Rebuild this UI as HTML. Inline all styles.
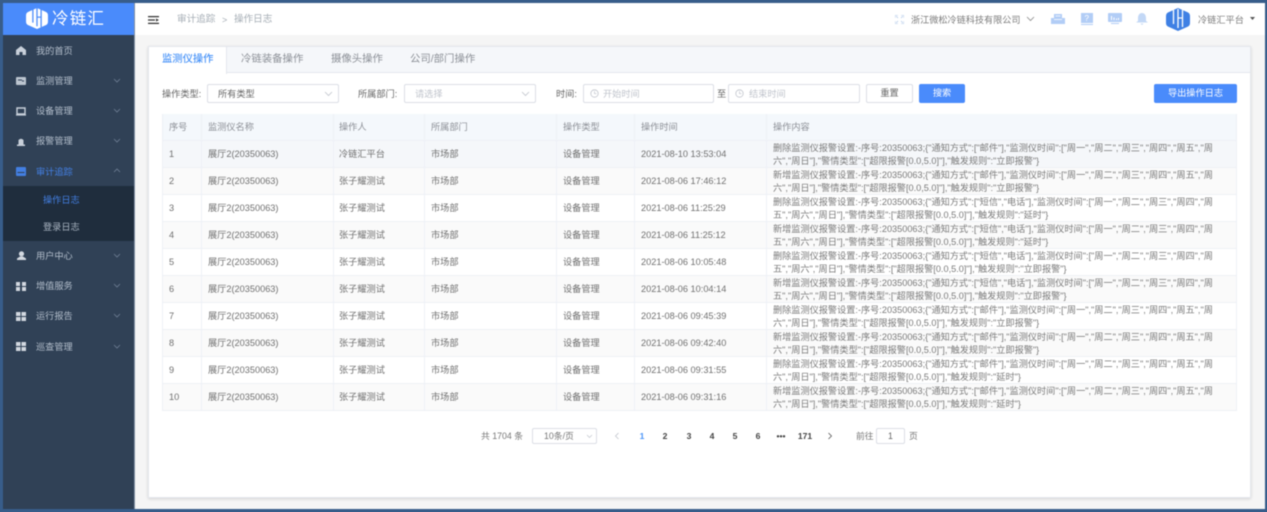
<!DOCTYPE html>
<html lang="zh"><head><meta charset="utf-8"><title>操作日志</title>
<style>
*{box-sizing:border-box;margin:0;padding:0}
html,body{width:1267px;height:512px;overflow:hidden;background:#385d8a}
body{position:relative;font-family:"Liberation Sans","Noto Sans CJK SC",sans-serif;font-size:9.2px;color:#666}
#wrap{position:absolute;left:0;top:0;width:1267px;height:512px;filter:blur(.42px)}
.a{position:absolute;white-space:nowrap}
.t{position:absolute;white-space:nowrap;line-height:14px}
.mi{color:#b4bfcc;left:36px;font-size:9.2px}
.ch{position:absolute;left:113px;width:8px;height:5px}
.r{position:absolute;left:162px;width:1075px;height:27px;border-bottom:1px solid #eef0f5;color:#707070}
.r span{position:absolute;top:6px;line-height:14px;white-space:nowrap}
.r .c1{left:7px}.r .c2{left:46px}.r .c3{left:177px}.r .c4{left:269px}.r .c5{left:401px}.r .c6{left:479px}
.r .c7{left:611px;top:0;line-height:13px;padding-top:1px;font-size:9.16px;color:#7a7a7a}
.e{background:#fafafa}
.v{position:absolute;top:114px;width:1px;height:297px;background:#eef1f6}
.inp{position:absolute;top:84px;height:19px;background:#fff;border:1px solid #dcdfe6;border-radius:2px}
.pg{position:absolute;top:429px;line-height:14px;font-weight:bold;font-size:8.6px;color:#444;transform:translateX(-50%)}
</style></head><body><div id="wrap">
<div class="a" style="left:3px;top:3px;width:1262px;height:506px;background:#f5f5f5"></div>
<div class="a" style="left:135px;top:3px;width:1130px;height:32px;background:#fff"></div>
<div class="a" style="left:3px;top:3px;width:131px;height:506px;background:#304156"></div>
<div class="a" style="left:134px;top:3px;width:1px;height:506px;background:#7f8ea3"></div>
<div class="a" style="left:3px;top:3px;width:131px;height:32px;background:#4a8bfb"></div>

<svg class="a" style="left:26px;top:8px" width="22" height="21" viewBox="0 0 24 23"><path d="M12 0 21 4Q24 5 24 8V15Q24 18 21 19L12 23 3 19Q0 18 0 15V8Q0 5 3 4Z" fill="#fff"/><path d="M7.500 1V16M12 0V20M16.500 1V21" stroke="#4a8bfb" stroke-width="1.400"/><path d="M12 10H17" stroke="#4a8bfb" stroke-width="1.300"/></svg>
<div class="t" style="left:52px;top:9px;color:#fff;font-size:16.500px;line-height:20px;letter-spacing:1.200px">冷链汇</div>

<!-- sidebar -->
<svg class="a" style="left:16px;top:46px" width="10" height="9" viewBox="0 0 10 9"><path d="M5 0 10 4V9H6.500V6H3.500V9H0V4Z" fill="#c8d0da"/></svg>
<div class="t mi" style="top:44px">我的首页</div>
<svg class="a" style="left:16px;top:77px" width="10" height="8" viewBox="0 0 10 8"><rect width="10" height="8" rx="1" fill="#bcc5d0"/><path d="M2 3H6M6 4H8" stroke="#304156"/></svg>
<div class="t mi" style="top:74px">监测管理</div>
<svg class="ch" style="top:78px" viewBox="0 0 8 5"><path d="M1 1 4 4 7 1" fill="none" stroke="#6f7f95" stroke-width=".8"/></svg>
<svg class="a" style="left:16px;top:107px" width="10" height="9" viewBox="0 0 10 9"><path d="M1 1H9V7H1Z" fill="none" stroke="#c8d0da" stroke-width="1.400"/><path d="M0 8H10" stroke="#c8d0da" stroke-width="1.200"/></svg>
<div class="t mi" style="top:104px">设备管理</div>
<svg class="ch" style="top:108px" viewBox="0 0 8 5"><path d="M1 1 4 4 7 1" fill="none" stroke="#6f7f95" stroke-width=".8"/></svg>
<svg class="a" style="left:17px;top:138px" width="8" height="8" viewBox="0 0 8 8"><path d="M1.500 2 Q4 -.5 6.500 2V6.500H1.500Z M0 6.500H8V8H0Z" fill="#c8d0da"/></svg>
<div class="t mi" style="top:134px">报警管理</div>
<svg class="ch" style="top:138px" viewBox="0 0 8 5"><path d="M1 1 4 4 7 1" fill="none" stroke="#6f7f95" stroke-width=".8"/></svg>
<svg class="a" style="left:16px;top:167px" width="10" height="9" viewBox="0 0 10 9"><rect width="10" height="9" rx="1" fill="#437fe2"/><path d="M1.500 5.500H8.500" stroke="#304156"/></svg>
<div class="t mi" style="top:165px;color:#437fe2">审计追踪</div>
<svg class="ch" style="top:168px" viewBox="0 0 8 5"><path d="M1 4 4 1 7 4" fill="none" stroke="#6f7f95" stroke-width=".8"/></svg>
<div class="a" style="left:3px;top:186px;width:131px;height:55px;background:#1f2d3d"></div>
<div class="t" style="left:43px;top:193px;color:#437fe2">操作日志</div>
<div class="t" style="left:43px;top:220px;color:#aab5c2">登录日志</div>
<svg class="a" style="left:17px;top:251px" width="9" height="9" viewBox="0 0 9 9"><circle cx="4.500" cy="2.800" r="2.600" fill="#d2d8e0"/><path d="M0 9V7.500L3 5.500H6L9 7.500V9Z" fill="#d2d8e0"/></svg>
<div class="t mi" style="top:249px">用户中心</div>
<svg class="ch" style="top:253px" viewBox="0 0 8 5"><path d="M1 1 4 4 7 1" fill="none" stroke="#6f7f95" stroke-width=".8"/></svg>
<svg class="a" style="left:16px;top:282px" width="10" height="9" viewBox="0 0 10 9"><path d="M0 0H4V4H0ZM6 0H10V4H6ZM0 5H4V9H0ZM6 5H10V9H6Z" fill="#d2d8e0"/></svg>
<div class="t mi" style="top:279px">增值服务</div>
<svg class="ch" style="top:283px" viewBox="0 0 8 5"><path d="M1 1 4 4 7 1" fill="none" stroke="#6f7f95" stroke-width=".8"/></svg>
<svg class="a" style="left:16px;top:312px" width="10" height="9" viewBox="0 0 10 9"><path d="M0 0H4.500V4H0ZM5.500 0H10V4H5.500ZM0 5H4.500V9H0ZM5.500 5H10V9H5.500Z" fill="#d2d8e0"/></svg>
<div class="t mi" style="top:309px">运行报告</div>
<svg class="ch" style="top:313px" viewBox="0 0 8 5"><path d="M1 1 4 4 7 1" fill="none" stroke="#6f7f95" stroke-width=".8"/></svg>
<svg class="a" style="left:16px;top:342px" width="10" height="9" viewBox="0 0 10 9"><path d="M0 0H4.500V4H0ZM5.500 0H10V4H5.500ZM0 5H4.500V9H0ZM5.500 5H10V9H5.500Z" fill="#d2d8e0"/></svg>
<div class="t mi" style="top:340px">巡查管理</div>
<svg class="ch" style="top:344px" viewBox="0 0 8 5"><path d="M1 1 4 4 7 1" fill="none" stroke="#6f7f95" stroke-width=".8"/></svg>

<!-- top bar -->
<svg class="a" style="left:148px;top:16px" width="11" height="8" viewBox="0 0 11 8"><path d="M0 .6H11M0 4H7M0 7.400H11" stroke="#333" stroke-width="1.200"/><path d="M8 2.500 11 4 8 5.500Z" fill="#333"/></svg>
<div class="t" style="left:177px;top:13px;color:#a5adb5;font-size:9.600px">审计追踪</div>
<div class="t" style="left:222px;top:13px;color:#a5adb5;font-size:9px">&gt;</div>
<div class="t" style="left:234px;top:13px;color:#a5adb5;font-size:9.600px">操作日志</div>
<svg class="a" style="left:895px;top:15px" width="9" height="9" viewBox="0 0 9 9"><path d="M0 3V0H3M6 0H9V3M9 6V9H6M3 9H0V6M1 1 3 3M8 1 6 3M8 8 6 6M1 8 3 6" fill="none" stroke="#c3d5ee" stroke-width=".9"/></svg>
<div class="t" style="left:911px;top:12.500px;color:#7c7c7c;font-size:9.150px">浙江微松冷链科技有限公司</div>
<svg class="a" style="left:1026px;top:16px" width="9" height="6" viewBox="0 0 9 6"><path d="M1 1 4.500 4.500 8 1" fill="none" stroke="#888" stroke-width=".8"/></svg>
<svg class="a" style="left:1051px;top:14px" width="14" height="10" viewBox="0 0 14 10"><path d="M3 0H11V4H14V10H0V4H3Z" fill="#b2cdf6"/><path d="M4.500 2H9.500M3 5.500H11" stroke="#fff" stroke-width=".8"/></svg>
<svg class="a" style="left:1081px;top:13px" width="12" height="12" viewBox="0 0 12 12"><rect width="12" height="10" fill="#b2cdf6"/><rect y="11" width="12" height="1" fill="#b2cdf6"/></svg>
<div class="t" style="left:1084.500px;top:12.500px;color:#fff;font-size:8px;line-height:11px">?</div>
<svg class="a" style="left:1108px;top:13px" width="14" height="11" viewBox="0 0 14 11"><rect width="14" height="9" rx="1" fill="#b2cdf6"/><path d="M3.500 3V7M6 4.500V7M8.500 5.500V7M10.500 5V7" stroke="#fff"/><path d="M3 10.500H11" stroke="#b2cdf6"/></svg>
<svg class="a" style="left:1136px;top:13px" width="12" height="12" viewBox="0 0 12 12"><path d="M6 0C9 0 10 3 10 5V8L12 9.500H0L2 8V5C2 3 3 0 6 0Z M4.500 10.500H7.500L6 12Z" fill="#c3d8f6"/></svg>
<svg class="a" style="left:1166px;top:8px" width="24" height="23" viewBox="0 0 24 23"><path d="M12 0 21 4Q24 5 24 8V15Q24 18 21 19L12 23 3 19Q0 18 0 15V8Q0 5 3 4Z" fill="#3f80e4"/><path d="M7.500 2V16M12 1V20M16.500 2V19" stroke="#fff" stroke-width="1.300"/><path d="M12 10H17" stroke="#fff" stroke-width="1.200"/></svg>
<div class="t" style="left:1198px;top:12.500px;color:#7c7c7c;font-size:9.200px">冷链汇平台</div>
<svg class="a" style="left:1250px;top:17px" width="5" height="3" viewBox="0 0 5 3"><path d="M0 0H5L2.500 3Z" fill="#555"/></svg>

<!-- card -->
<div class="a" style="left:148px;top:46px;width:1103px;height:452px;background:#fff;border:1px solid #e4e7ed;box-shadow:0 1px 3px rgba(0,0,0,.14)"></div>
<div class="a" style="left:149px;top:47px;width:1101px;height:26px;background:#f5f7fa;border-bottom:1px solid #e4e7ed"></div>
<div class="a" style="left:149px;top:47px;width:78px;height:27px;background:#fff;border-right:1px solid #e4e7ed"></div>
<div class="t" style="left:162px;top:53px;color:#4a94f8;font-size:10.300px;font-weight:500">监测仪操作</div>
<div class="t" style="left:241px;top:53px;color:#8c9097;font-size:10.400px">冷链装备操作</div>
<div class="t" style="left:331px;top:53px;color:#8c9097;font-size:10.400px">摄像头操作</div>
<div class="t" style="left:410px;top:53px;color:#8c9097;font-size:10.400px">公司/部门操作</div>

<!-- filter -->
<div class="t" style="left:162px;top:87px;color:#666">操作类型:</div>
<div class="inp" style="left:207px;width:132px"></div>
<div class="t" style="left:218px;top:87px;color:#666">所有类型</div>
<svg class="a" style="left:324px;top:91px" width="9" height="6" viewBox="0 0 9 6"><path d="M1 1 4.500 4.500 8 1" fill="none" stroke="#c0c4cc" stroke-width=".8"/></svg>
<div class="t" style="left:358px;top:87px;color:#666">所属部门:</div>
<div class="inp" style="left:404px;width:132px"></div>
<div class="t" style="left:415px;top:87px;color:#c0c4cc">请选择</div>
<svg class="a" style="left:521px;top:91px" width="9" height="6" viewBox="0 0 9 6"><path d="M1 1 4.500 4.500 8 1" fill="none" stroke="#c0c4cc" stroke-width=".8"/></svg>
<div class="t" style="left:556px;top:87px;color:#666">时间:</div>
<div class="inp" style="left:583px;width:131px"></div>
<svg class="a" style="left:590px;top:89px" width="9" height="9" viewBox="0 0 9 9"><circle cx="4.500" cy="4.500" r="3.700" fill="none" stroke="#c0c4cc" stroke-width=".8"/><path d="M4.500 2.300V4.700H6.500" fill="none" stroke="#c0c4cc" stroke-width=".7"/></svg>
<div class="t" style="left:603px;top:87px;color:#c0c4cc">开始时间</div>
<div class="t" style="left:717px;top:87px;color:#666">至</div>
<div class="inp" style="left:728px;width:132px"></div>
<svg class="a" style="left:735px;top:89px" width="9" height="9" viewBox="0 0 9 9"><circle cx="4.500" cy="4.500" r="3.700" fill="none" stroke="#c0c4cc" stroke-width=".8"/><path d="M4.500 2.300V4.700H6.500" fill="none" stroke="#c0c4cc" stroke-width=".7"/></svg>
<div class="t" style="left:749px;top:87px;color:#c0c4cc">结束时间</div>
<div class="inp" style="left:866px;width:47px;text-align:center;line-height:17px;color:#666">重置</div>
<div class="a" style="left:919px;top:84px;width:46px;height:19px;background:#4a8bfb;border-radius:2px;color:#fff;text-align:center;line-height:19px">搜索</div>
<div class="a" style="left:1154px;top:84px;width:83px;height:19px;background:#4a8bfb;border-radius:2px;color:#fff;text-align:center;line-height:19px">导出操作日志</div>

<!-- table -->
<div class="a" style="left:162px;top:114px;width:1075px;height:27px;background:#f4f8fc;border-bottom:1px solid #eef0f5;color:#8c8f96">
<span class="t" style="left:7px;top:6px">序号</span><span class="t" style="left:46px;top:6px">监测仪名称</span><span class="t" style="left:177px;top:6px">操作人</span><span class="t" style="left:269px;top:6px">所属部门</span><span class="t" style="left:401px;top:6px">操作类型</span><span class="t" style="left:479px;top:6px">操作时间</span><span class="t" style="left:611px;top:6px">操作内容</span></div>

<div class="r" style="top:141px;background:#f5f7fa"><span class="c1">1</span><span class="c2">展厅2(20350063)</span><span class="c3">冷链汇平台</span><span class="c4">市场部</span><span class="c5">设备管理</span><span class="c6">2021-08-10 13:53:04</span><span class="c7">删除监测仪报警设置:-序号:20350063;{"通知方式":["邮件"],"监测仪时间":["周一","周二","周三","周四","周五","周<br>六","周日"],"警情类型":["超限报警[0.0,5.0]"],"触发规则":"立即报警"}</span></div>
<div class="r e" style="top:168px"><span class="c1">2</span><span class="c2">展厅2(20350063)</span><span class="c3">张子耀测试</span><span class="c4">市场部</span><span class="c5">设备管理</span><span class="c6">2021-08-06 17:46:12</span><span class="c7">新增监测仪报警设置:-序号:20350063;{"通知方式":["邮件"],"监测仪时间":["周一","周二","周三","周四","周五","周<br>六","周日"],"警情类型":["超限报警[0.0,5.0]"],"触发规则":"立即报警"}</span></div>
<div class="r" style="top:195px"><span class="c1">3</span><span class="c2">展厅2(20350063)</span><span class="c3">张子耀测试</span><span class="c4">市场部</span><span class="c5">设备管理</span><span class="c6">2021-08-06 11:25:29</span><span class="c7">删除监测仪报警设置:-序号:20350063;{"通知方式":["短信","电话"],"监测仪时间":["周一","周二","周三","周四","周<br>五","周六","周日"],"警情类型":["超限报警[0.0,5.0]"],"触发规则":"延时"}</span></div>
<div class="r e" style="top:222px"><span class="c1">4</span><span class="c2">展厅2(20350063)</span><span class="c3">张子耀测试</span><span class="c4">市场部</span><span class="c5">设备管理</span><span class="c6">2021-08-06 11:25:12</span><span class="c7">新增监测仪报警设置:-序号:20350063;{"通知方式":["短信","电话"],"监测仪时间":["周一","周二","周三","周四","周<br>五","周六","周日"],"警情类型":["超限报警[0.0,5.0]"],"触发规则":"延时"}</span></div>
<div class="r" style="top:249px"><span class="c1">5</span><span class="c2">展厅2(20350063)</span><span class="c3">张子耀测试</span><span class="c4">市场部</span><span class="c5">设备管理</span><span class="c6">2021-08-06 10:05:48</span><span class="c7">删除监测仪报警设置:-序号:20350063;{"通知方式":["短信","电话"],"监测仪时间":["周一","周二","周三","周四","周<br>五","周六","周日"],"警情类型":["超限报警[0.0,5.0]"],"触发规则":"立即报警"}</span></div>
<div class="r e" style="top:276px"><span class="c1">6</span><span class="c2">展厅2(20350063)</span><span class="c3">张子耀测试</span><span class="c4">市场部</span><span class="c5">设备管理</span><span class="c6">2021-08-06 10:04:14</span><span class="c7">新增监测仪报警设置:-序号:20350063;{"通知方式":["短信","电话"],"监测仪时间":["周一","周二","周三","周四","周<br>五","周六","周日"],"警情类型":["超限报警[0.0,5.0]"],"触发规则":"立即报警"}</span></div>
<div class="r" style="top:303px"><span class="c1">7</span><span class="c2">展厅2(20350063)</span><span class="c3">张子耀测试</span><span class="c4">市场部</span><span class="c5">设备管理</span><span class="c6">2021-08-06 09:45:39</span><span class="c7">删除监测仪报警设置:-序号:20350063;{"通知方式":["邮件"],"监测仪时间":["周一","周二","周三","周四","周五","周<br>六","周日"],"警情类型":["超限报警[0.0,5.0]"],"触发规则":"立即报警"}</span></div>
<div class="r e" style="top:330px"><span class="c1">8</span><span class="c2">展厅2(20350063)</span><span class="c3">张子耀测试</span><span class="c4">市场部</span><span class="c5">设备管理</span><span class="c6">2021-08-06 09:42:40</span><span class="c7">新增监测仪报警设置:-序号:20350063;{"通知方式":["邮件"],"监测仪时间":["周一","周二","周三","周四","周五","周<br>六","周日"],"警情类型":["超限报警[0.0,5.0]"],"触发规则":"立即报警"}</span></div>
<div class="r" style="top:357px"><span class="c1">9</span><span class="c2">展厅2(20350063)</span><span class="c3">张子耀测试</span><span class="c4">市场部</span><span class="c5">设备管理</span><span class="c6">2021-08-06 09:31:55</span><span class="c7">删除监测仪报警设置:-序号:20350063;{"通知方式":["邮件"],"监测仪时间":["周一","周二","周三","周四","周五","周<br>六","周日"],"警情类型":["超限报警[0.0,5.0]"],"触发规则":"延时"}</span></div>
<div class="r e" style="top:384px"><span class="c1">10</span><span class="c2">展厅2(20350063)</span><span class="c3">张子耀测试</span><span class="c4">市场部</span><span class="c5">设备管理</span><span class="c6">2021-08-06 09:31:16</span><span class="c7">新增监测仪报警设置:-序号:20350063;{"通知方式":["邮件"],"监测仪时间":["周一","周二","周三","周四","周五","周<br>六","周日"],"警情类型":["超限报警[0.0,5.0]"],"触发规则":"延时"}</span></div>

<div class="v" style="left:162px"></div><div class="v" style="left:201px"></div><div class="v" style="left:333px"></div><div class="v" style="left:424px"></div><div class="v" style="left:556px"></div><div class="v" style="left:634px"></div><div class="v" style="left:766px"></div><div class="v" style="left:1236px"></div>

<!-- pagination -->
<div class="t" style="left:481px;top:429px;color:#777;font-size:8.800px">共 1704 条</div>
<div class="a" style="left:532px;top:428px;width:65px;height:16px;border:1px solid #dcdfe6;border-radius:2px;background:#fff"></div>
<div class="t" style="left:544px;top:429px;color:#777;font-size:8.800px">10条/页</div>
<svg class="a" style="left:586px;top:434px" width="7" height="5" viewBox="0 0 7 5"><path d="M1 1 3.500 3.500 6 1" fill="none" stroke="#c0c4cc" stroke-width=".7"/></svg>
<svg class="a" style="left:614px;top:432px" width="6" height="8" viewBox="0 0 6 8"><path d="M4.500 1 1.500 4 4.500 7" fill="none" stroke="#c0c4cc" stroke-width=".8"/></svg>
<div class="pg" style="left:642px;color:#4a94f8">1</div><div class="pg" style="left:665px">2</div><div class="pg" style="left:689px">3</div><div class="pg" style="left:712px">4</div><div class="pg" style="left:735px">5</div><div class="pg" style="left:758px">6</div><div class="pg" style="left:781px">•••</div><div class="pg" style="left:805px">171</div>
<svg class="a" style="left:827px;top:432px" width="6" height="8" viewBox="0 0 6 8"><path d="M1.500 1 4.500 4 1.500 7" fill="none" stroke="#555" stroke-width=".8"/></svg>
<div class="t" style="left:856px;top:429px;color:#777;font-size:8.800px">前往</div>
<div class="a" style="left:876px;top:428px;width:29px;height:16px;border:1px solid #dcdfe6;border-radius:2px;background:#fff;color:#666;text-align:center;line-height:14px;font-size:8.800px">1</div>
<div class="t" style="left:909px;top:429px;color:#777;font-size:8.800px">页</div>
</div></body></html>
